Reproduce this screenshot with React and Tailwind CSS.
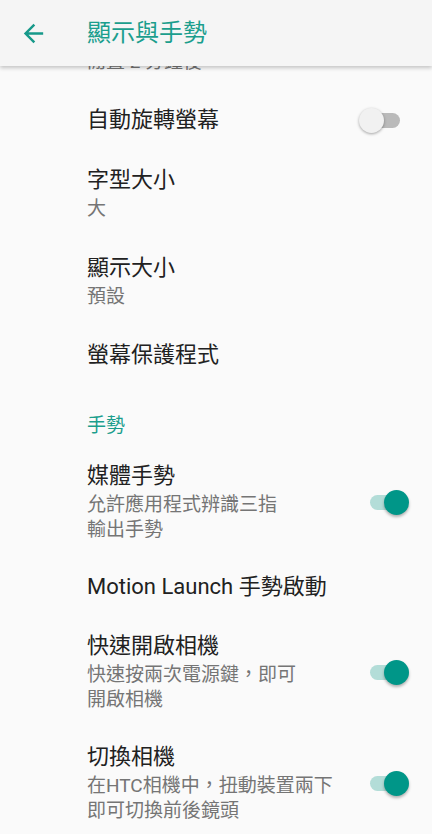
import React from "react";

const FONT = { fontFamily: 'Roboto, "Noto Sans CJK TC", sans-serif' };

function Toggle({ on }) {
  if (on) {
    return (
      <div className="relative w-[39px] h-[25px] mr-[23px] shrink-0">
        <div className="absolute left-0 top-[5px] w-[37px] h-[15px] rounded-full bg-[#b3ddd8]" />
        <div className="absolute right-0 top-0 w-[25px] h-[25px] rounded-full bg-[#009688] shadow-[0_2px_3px_rgba(0,0,0,0.3)]" />
      </div>
    );
  }
  return (
    <div className="relative w-[41px] h-[25px] mr-[32px] shrink-0">
      <div className="absolute right-0 top-[5px] w-[37px] h-[15px] rounded-full bg-[#bababa]" />
      <div className="absolute left-0 top-0 w-[25px] h-[25px] rounded-full bg-[#f1f1f1] shadow-[0_1px_3px_rgba(0,0,0,0.35)]" />
    </div>
  );
}

function Row({ title, lines = [], toggle, minH }) {
  return (
    <div
      className={`flex items-center pl-[87px] py-[15.5px] ${minH ? "min-h-[88px]" : ""}`}
    >
      <div className="flex-1 flex flex-col">
        <div className="text-[22px] leading-[28px] text-[#212121]">{title}</div>
        {lines.length > 0 && (
          <div className="mt-[2px] flex flex-col">
            {lines.map((l, i) => (
              <div key={i} className="text-[19px] leading-[25px] text-[#757575] whitespace-nowrap">
                {l}
              </div>
            ))}
          </div>
        )}
      </div>
      {toggle !== undefined && <Toggle on={toggle} />}
    </div>
  );
}

export default function App() {
  return (
    <div className="relative w-[432px] h-[834px] overflow-hidden bg-[#fafafa]" style={FONT}>
      <div className="absolute top-0 left-0 right-0 h-[66px] bg-[#f5f5f5] z-10 flex items-center shadow-[0_2px_4px_rgba(0,0,0,0.22)]">
        <svg
          className="ml-[19px]"
          width="29"
          height="29"
          viewBox="0 0 24 24"
          fill="#17998a"
        >
          <path d="M20 11H7.83l5.59-5.59L12 4l-8 8 8 8 1.41-1.41L7.83 13H20v-2z" />
        </svg>
        <div className="ml-[39px] text-[24px] leading-[30px] text-[#1b9e8d]">顯示與手勢</div>
      </div>

      <div className="mt-[66px] h-[768px] overflow-hidden">
        <div className="flex flex-col -mt-[63.5px]">
          <Row title="螢幕逾時" lines={["閒置 2 分鐘後"]} minH />
          <Row title="自動旋轉螢幕" toggle={false} />
          <Row title="字型大小" lines={["大"]} minH />
          <Row title="顯示大小" lines={["預設"]} minH />
          <Row title="螢幕保護程式" />
          <div className="pl-[87px] pt-[28px] pb-[9.3px] text-[19px] leading-[25px] text-[#1b9e8d]">
            手勢
          </div>
          <Row title="媒體手勢" lines={["允許應用程式辨識三指", "輸出手勢"]} toggle={true} />
          <Row title="Motion Launch 手勢啟動" />
          <Row title="快速開啟相機" lines={["快速按兩次電源鍵，即可", "開啟相機"]} toggle={true} />
          <Row title="切換相機" lines={["在HTC相機中，扭動裝置兩下", "即可切換前後鏡頭"]} toggle={true} />
        </div>
      </div>
    </div>
  );
}
